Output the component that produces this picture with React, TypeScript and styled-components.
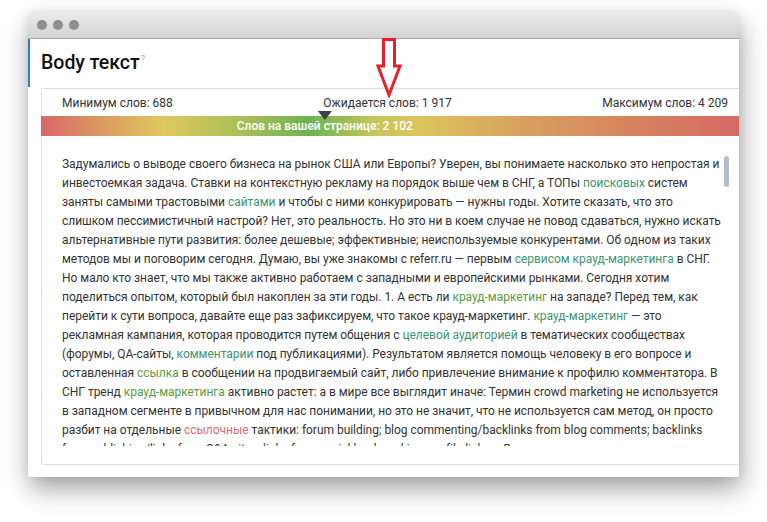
import React from 'react';
import styled, { createGlobalStyle } from 'styled-components';

const GlobalStyle = createGlobalStyle`
  html, body {
    margin: 0;
    padding: 0;
    background: #fff;
  }
  body {
    font-family: Roboto, "Noto Sans", "Liberation Sans", Arial, sans-serif;
    color: #333;
  }
`;

const Stage = styled.div`
  width: 767px;
  height: 522px;
  padding: 12px 28px 0 28px;
  box-sizing: border-box;
  overflow: hidden;
`;

const Window = styled.div`
  position: relative;
  width: 711px;
  height: 465px;
  display: flex;
  flex-direction: column;
  background: #fff;
  border-radius: 5px 5px 0 0;
  overflow: hidden;
  box-shadow: 2px 12px 26px rgba(0, 0, 0, 0.36), 0 0 8px rgba(0, 0, 0, 0.08);
`;

const TitleBar = styled.div`
  height: 26px;
  flex-shrink: 0;
  display: flex;
  align-items: center;
  gap: 6px;
  padding-left: 9px;
  background: linear-gradient(#ebebeb, #d3d3d3);
  border-bottom: 1px solid #acacac;
`;

const Dot = styled.span`
  width: 10px;
  height: 10px;
  border-radius: 50%;
  background: #8d8d8f;
`;

const Content = styled.div`
  flex: 1;
  display: flex;
  flex-direction: column;
  padding: 12px 0 12px 13px;
  background: linear-gradient(#2b7ad5, #2b7ad5) 0 0 / 2px 48px no-repeat, #fff;
`;

const Title = styled.h1`
  margin: 0 0 13px 0;
  font-size: 19.5px;
  line-height: 24px;
  font-weight: 500;
  color: #111;
`;

const Hint = styled.sup`
  font-size: 9px;
  line-height: 0;
  font-weight: 400;
  color: #a3a8b0;
  margin-left: 1px;
  vertical-align: 7px;
`;

const Panel = styled.div`
  flex: 1;
  display: flex;
  flex-direction: column;
  margin-right: -2px;
  border: 1px solid #d8dfec;
  border-radius: 3px;
  min-height: 0;
`;

const Limits = styled.div`
  height: 27px;
  display: flex;
  align-items: center;
  justify-content: space-between;
  padding: 0 12px 0 20px;
  font-size: 12px;
  color: #333;
`;

const Gauge = styled.div`
  position: relative;
  height: 20px;
  margin-left: -1px;
  background: linear-gradient(
    90deg,
    #d9666a 0%,
    #dc9c62 9%,
    #dfc85e 17.5%,
    #a9be58 29%,
    #6cb352 38.5%,
    #c8c65a 48%,
    #dcc55c 54%,
    #d8a260 68%,
    #d7885f 82%,
    #d66966 100%
  );
`;

const Pointer = styled.div`
  position: absolute;
  top: -5px;
  bottom: 0;
  display: flex;
  flex-direction: column;
  align-items: center;
  transform: translateX(-50%);
`;

const Marker = styled.span`
  width: 0;
  height: 0;
  border-left: 7px solid transparent;
  border-right: 7px solid transparent;
  border-top: 9px solid #3f3f3f;
`;

const GaugeText = styled.span`
  margin-top: -4px;
  font-size: 12px;
  line-height: 20px;
  font-weight: 500;
  color: #fff;
  white-space: nowrap;
`;

const Body = styled.div`
  display: flex;
  gap: 2px;
  height: 291px;
  margin-top: 19px;
  padding: 0 11px 0 20px;
`;

const TextColumn = styled.div`
  flex: 1;
  overflow: hidden;
  font-size: 12px;
  line-height: 19px;
  letter-spacing: -0.03px;
  color: #333;
`;

const Line = styled.div`
  white-space: nowrap;
`;

const Mark = styled.span<{ tone: 'teal' | 'green' | 'red' }>`
  color: ${p => (p.tone === 'red' ? '#e06873' : p.tone === 'green' ? '#5a9c45' : '#3d9470')};
`;

const ScrollTrack = styled.div`
  width: 5px;
  padding-top: 1px;
`;

const ScrollThumb = styled.div`
  height: 31px;
  border-radius: 3px;
  background: #b4bcd0;
`;

const Annotation = styled.svg`
  position: absolute;
  left: 348px;
  top: 26px;
`;

type Seg = string | [string, 'teal' | 'green' | 'red'];

const lines: Seg[][] = [
  ['Задумались о выводе своего бизнеса на рынок США или Европы? Уверен, вы понимаете насколько это непростая и'],
  ['инвестоемкая задача. Ставки на контекстную рекламу на порядок выше чем в СНГ, а ТОПы ', ['поисковых', 'teal'], ' систем'],
  ['заняты самыми трастовыми ', ['сайтами', 'teal'], ' и чтобы с ними конкурировать — нужны годы. Хотите сказать, что это'],
  ['слишком пессимистичный настрой? Нет, это реальность. Но это ни в коем случае не повод сдаваться, нужно искать'],
  ['альтернативные пути развития: более дешевые; эффективные; неиспользуемые конкурентами. Об одном из таких'],
  ['методов мы и поговорим сегодня. Думаю, вы уже знакомы с referr.ru — первым ', ['сервисом крауд-маркетинга', 'teal'], ' в СНГ.'],
  ['Но мало кто знает, что мы также активно работаем с западными и европейскими рынками. Сегодня хотим'],
  ['поделиться опытом, который был накоплен за эти годы. 1. А есть ли ', ['крауд-маркетинг', 'green'], ' на западе? Перед тем, как'],
  ['перейти к сути вопроса, давайте еще раз зафиксируем, что такое крауд-маркетинг. ', ['крауд-маркетинг', 'teal'], ' — это'],
  ['рекламная кампания, которая проводится путем общения с ', ['целевой аудиторией', 'teal'], ' в тематических сообществах'],
  ['(форумы, QA-сайты, ', ['комментарии', 'teal'], ' под публикациями). Результатом является помощь человеку в его вопросе и'],
  ['оставленная ', ['ссылка', 'green'], ' в сообщении на продвигаемый сайт, либо привлечение внимание к профилю комментатора. В'],
  ['СНГ тренд ', ['крауд-маркетинга', 'green'], ' активно растет: а в мире все выглядит иначе: Термин crowd marketing не используется'],
  ['в западном сегменте в привычном для нас понимании, но это не значит, что не используется сам метод, он просто'],
  ['разбит на отдельные ', ['ссылочные', 'red'], ' тактики: forum building; blog commenting/backlinks from blog comments; backlinks'],
  ['from publishing/links from Q&A sites; links from social bookmarking; profile links – В том числе —'],
];

const stats = { min: 688, expected: 1917, max: 4209, current: 2102 };
// позиция маркера на шкале
const pointerPct = 40.6;

const fmt = (n: number) => n.toLocaleString('ru-RU').replace(/\u00a0/g, ' ');

const App: React.FC = () => {
  return (
    <>
      <GlobalStyle />
      <Stage>
        <Window>
          <TitleBar>
            <Dot />
            <Dot />
            <Dot />
          </TitleBar>
          <Content>
            <Title>
              Body текст<Hint>?</Hint>
            </Title>
            <Panel>
              <Limits>
                <span>Минимум слов: {fmt(stats.min)}</span>
                <span>Ожидается слов: {fmt(stats.expected)}</span>
                <span>Максимум слов: {fmt(stats.max)}</span>
              </Limits>
              <Gauge>
                <Pointer style={{ left: `${pointerPct}%` }}>
                  <Marker />
                  <GaugeText>Слов на вашей странице: {fmt(stats.current)}</GaugeText>
                </Pointer>
              </Gauge>
              <Body>
                <TextColumn>
                  {lines.map((line, i) => (
                    <Line key={i}>
                      {line.map((seg, j) =>
                        typeof seg === 'string' ? (
                          <React.Fragment key={j}>{seg}</React.Fragment>
                        ) : (
                          <Mark key={j} tone={seg[1]}>
                            {seg[0]}
                          </Mark>
                        )
                      )}
                    </Line>
                  ))}
                </TextColumn>
                <ScrollTrack>
                  <ScrollThumb />
                </ScrollTrack>
              </Body>
            </Panel>
          </Content>
          <Annotation width="26" height="60" viewBox="0 0 26 60">
            <path
              d="M7.5 1.5 V28 H2 L13 57 L24 28 H18.5 V1.5 Z"
              fill="none"
              stroke="#e8202a"
              strokeWidth="3"
              strokeLinejoin="miter"
            />
          </Annotation>
        </Window>
      </Stage>
    </>
  );
};

export default App;
